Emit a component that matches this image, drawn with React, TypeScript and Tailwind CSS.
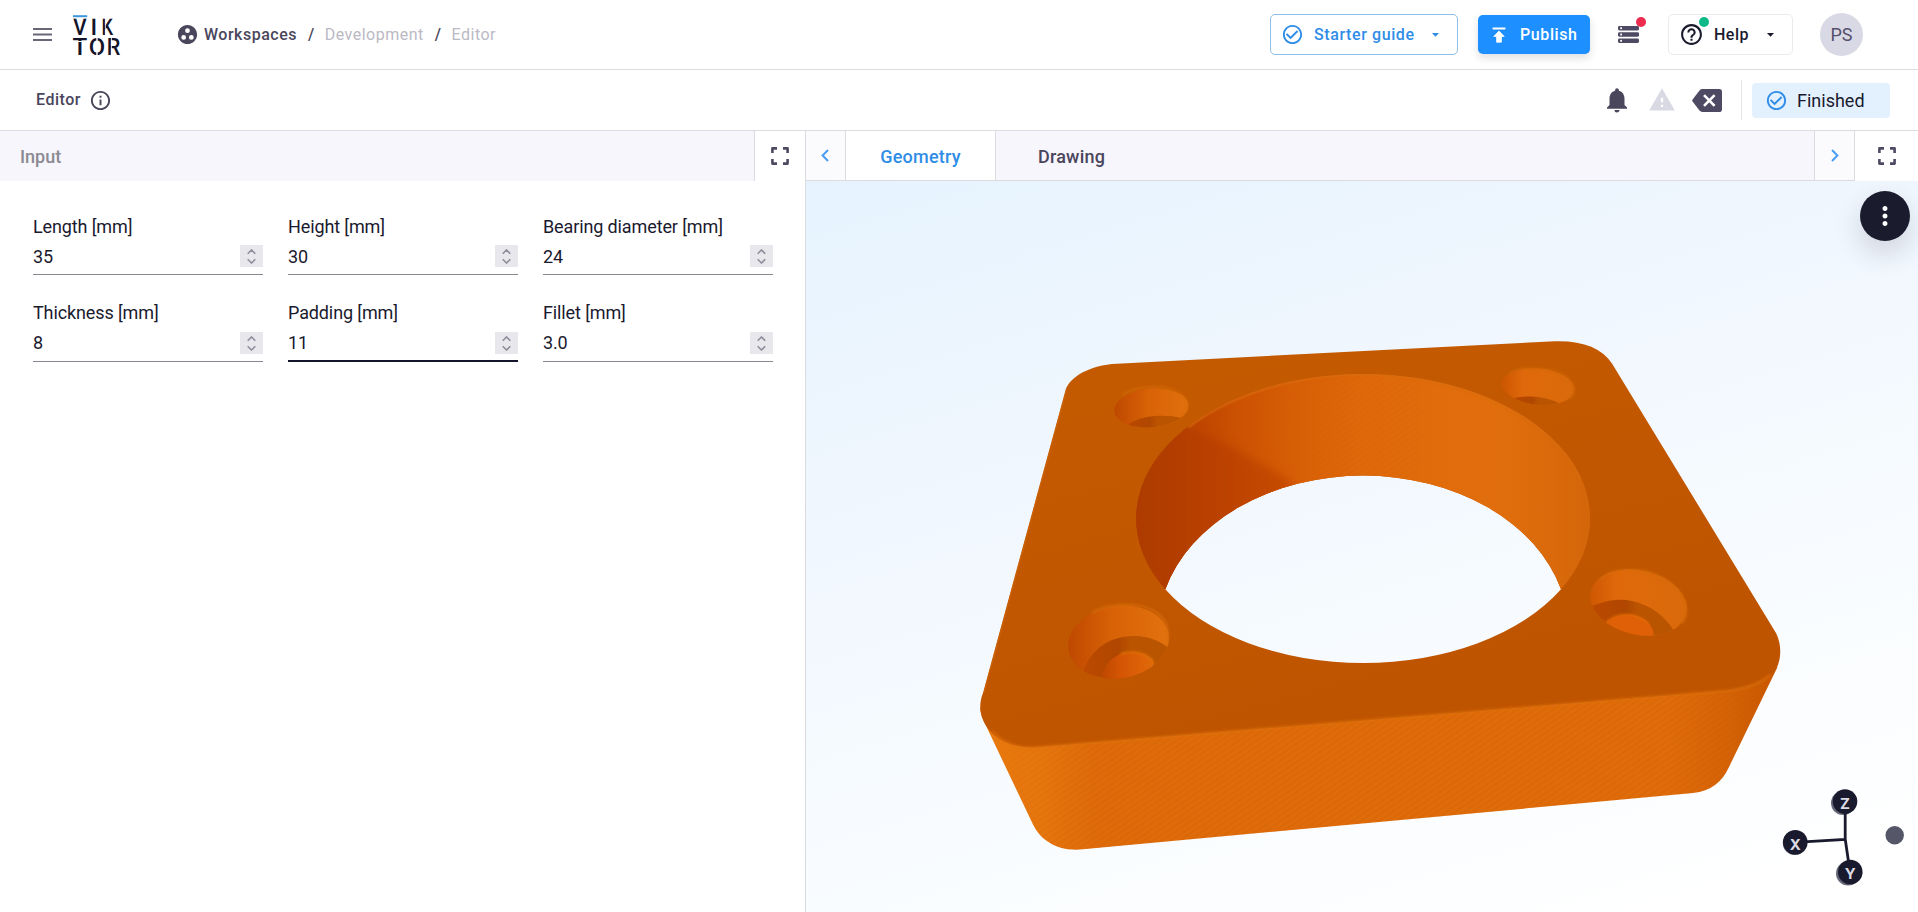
import React from "react";
import {
  MdGroupWork,
  MdInfoOutline,
  MdCheckCircleOutline,
  MdArrowDropDown,
  MdHelpOutline,
  MdNotifications,
  MdWarning,
  MdMoreVert,
} from "react-icons/md";

function Logo() {
  return (
    <svg width="56" height="54" viewBox="69 9 56 54" className="block" aria-label="VIKTOR">
      <g fill="#14142a" fontFamily="Roboto, 'Liberation Sans', sans-serif" fontSize="23.4" fontWeight="500">
        <text x="73.1" y="35.2" textLength="13.8" lengthAdjust="spacingAndGlyphs">V</text>
        <text x="90.6" y="35.2">I</text>
        <text x="101.4" y="35.2" textLength="11.6" lengthAdjust="spacingAndGlyphs">K</text>
        <text x="72.6" y="55.1" textLength="14.8" lengthAdjust="spacingAndGlyphs">T</text>
        <text x="88.8" y="55.1" textLength="16.4" lengthAdjust="spacingAndGlyphs">O</text>
        <text x="106.8" y="55.1" textLength="13.6" lengthAdjust="spacingAndGlyphs">R</text>
      </g>
      <rect x="72" y="17" width="49" height="1.7" fill="#fff" />
      <rect x="73" y="15.2" width="14.2" height="2" fill="#3d97dc" />
      <g stroke="#fff">
        <path d="M73 41.5H87" strokeWidth="1" />
        <path d="M97 37V42.5M97 51.5V57" strokeWidth="1.4" />
        <path d="M105.4 17V36" strokeWidth="0.8" />
        <path d="M111.4 37V57" strokeWidth="0.9" />
      </g>
    </svg>
  );
}

function FullscreenIcon() {
  return (
    <svg width="18" height="18" viewBox="0 0 18 18" className="block" fill="none" stroke="#4f4a63" strokeWidth="2.6" strokeLinejoin="round">
      <path d="M1.4 6V1.4H6M12 1.4H16.6V6M16.6 12V16.6H12M6 16.6H1.4V12" />
    </svg>
  );
}

function Chevron({ flip }: { flip?: boolean }) {
  return (
    <svg width="8" height="13" viewBox="0 0 8 13" className="block" fill="none" stroke="#4a9df0" strokeWidth="2">
      <path d={flip ? "M1 1L6.4 6.5L1 12" : "M7 1L1.6 6.5L7 12"} />
    </svg>
  );
}

function Spinner() {
  return (
    <div className="flex h-[22px] w-[23px] items-center justify-center bg-[#e8e7ec]">
      <svg width="9" height="15" viewBox="0 0 9 15" fill="none" stroke="#8f8d9b" strokeWidth="1.6">
        <path d="M0.7 4.8L4.5 1L8.3 4.8M0.7 10.2L4.5 14L8.3 10.2" />
      </svg>
    </div>
  );
}

type FieldProps = { label: string; value: string; active?: boolean; tight?: boolean };

function Field({ label, value, active, tight }: FieldProps) {
  return (
    <div className="flex h-[62px] flex-col text-[18px] tracking-[-0.12px] text-[#1a1a2e]">
      <div className={tight ? "h-[28px] leading-[25px]" : "h-[28px] leading-[27px]"}>{label}</div>
      <div
        className={
          active
            ? "flex h-[34px] items-start justify-between border-b-2 border-[#14142c] pt-[4px]"
            : "flex h-[34px] items-start justify-between border-b border-[#8a8992] pt-[4px]"
        }
      >
        <span className={tight ? "leading-[22px]" : "leading-[24px]"}>{value}</span>
        <Spinner />
      </div>
    </div>
  );
}

const fields: FieldProps[] = [
  { label: "Length [mm]", value: "35" },
  { label: "Height [mm]", value: "30" },
  { label: "Bearing diameter [mm]", value: "24" },
  { label: "Thickness [mm]", value: "8", tight: true },
  { label: "Padding [mm]", value: "11", active: true, tight: true },
  { label: "Fillet [mm]", value: "3.0", tight: true },
];

const TOP_OUTLINE =
  "M1066 388.5C1071 377 1089 365 1117 363.7L1550 341.5C1580 339.5 1601 347 1612 363.5L1776 633C1781 643 1781.5 655 1778 665C1772 679 1752 688.5 1727 690.7L1034 747.5C1008 748 984 735 980.3 710C980 703 981 698 983 693Z";
const OPENING = "M1165.3 589.3A205 154 0 0 1 1561 589.3A227 144.5 0 0 1 1165.3 589.3Z";
const WALL = "M1165.3 589.3A227 144.5 0 1 1 1561 589.3A205 154 0 0 0 1165.3 589.3Z";

function Scene() {
  return (
    <svg viewBox="806 181 1112 731" width="1112" height="731" className="block">
      <defs>
        <linearGradient id="top" x1="1200" y1="350" x2="1300" y2="740" gradientUnits="userSpaceOnUse">
          <stop offset="0" stopColor="#c45a00" />
          <stop offset="1" stopColor="#bf5400" />
        </linearGradient>
        <linearGradient id="front" x1="985" y1="0" x2="1780" y2="0" gradientUnits="userSpaceOnUse">
          <stop offset="0" stopColor="#e8790e" />
          <stop offset="0.07" stopColor="#e6760e" />
          <stop offset="0.14" stopColor="#df6b0a" />
          <stop offset="0.86" stopColor="#e06c0a" />
          <stop offset="0.93" stopColor="#d66307" />
          <stop offset="1" stopColor="#c75600" />
        </linearGradient>
        <linearGradient id="wall" x1="1136" y1="0" x2="1591" y2="0" gradientUnits="userSpaceOnUse">
          <stop offset="0" stopColor="#ae3c00" />
          <stop offset="0.08" stopColor="#b84000" />
          <stop offset="0.15" stopColor="#c04700" />
          <stop offset="0.23" stopColor="#cd5202" />
          <stop offset="0.35" stopColor="#d85e06" />
          <stop offset="0.5" stopColor="#df690a" />
          <stop offset="0.8" stopColor="#e16e0c" />
          <stop offset="1" stopColor="#d4660a" />
        </linearGradient>
        <linearGradient id="shade" x1="1136" y1="0" x2="1300" y2="0" gradientUnits="userSpaceOnUse">
          <stop offset="0" stopColor="#ae3b00" />
          <stop offset="0.35" stopColor="#b63f00" />
          <stop offset="1" stopColor="#c94b00" />
        </linearGradient>
        <linearGradient id="bore" x1="0" y1="0" x2="1" y2="0">
          <stop offset="0" stopColor="#bd4700" />
          <stop offset="0.45" stopColor="#d86206" />
          <stop offset="1" stopColor="#e2720e" />
        </linearGradient>
        <linearGradient id="boreRight" x1="0" y1="0" x2="1" y2="0">
          <stop offset="0" stopColor="#cc5502" />
          <stop offset="0.3" stopColor="#df690a" />
          <stop offset="1" stopColor="#d96a0b" />
        </linearGradient>
        <linearGradient id="floor" x1="0" y1="0" x2="1" y2="0">
          <stop offset="0" stopColor="#bd4900" />
          <stop offset="0.44" stopColor="#b04700" />
          <stop offset="0.58" stopColor="#bb5400" />
          <stop offset="1" stopColor="#b85400" />
        </linearGradient>
        <linearGradient id="pin" x1="0" y1="0" x2="1" y2="0">
          <stop offset="0" stopColor="#bd4800" />
          <stop offset="0.35" stopColor="#d45404" />
          <stop offset="1" stopColor="#e26a0a" />
        </linearGradient>
        <pattern id="grain" width="200" height="5" patternUnits="userSpaceOnUse" patternTransform="rotate(-34)">
          <rect width="200" height="1.6" y="0.9" fill="#c65500" opacity="0.1" />
          <rect width="200" height="2.4" y="0.5" fill="#c65500" opacity="0.1" />
        </pattern>
        <linearGradient id="grainFade" x1="990" y1="0" x2="1080" y2="0" gradientUnits="userSpaceOnUse">
          <stop offset="0" stopColor="#fff" stopOpacity="0" />
          <stop offset="1" stopColor="#fff" />
        </linearGradient>
        <mask id="grainMask" maskUnits="userSpaceOnUse" x="980" y="660" width="800" height="200">
          <rect x="980" y="660" width="800" height="200" fill="url(#grainFade)" />
        </mask>
        <filter id="soft" x="-20%" y="-20%" width="140%" height="140%">
          <feGaussianBlur stdDeviation="5" />
        </filter>
        <filter id="slight" x="-20%" y="-20%" width="140%" height="140%">
          <feGaussianBlur stdDeviation="0.8" />
        </filter>
        <clipPath id="wallClip"><path d={WALL} /></clipPath>
        <clipPath id="bl"><ellipse cx="1118.5" cy="642" rx="50.6" ry="36.2" transform="rotate(-9 1118.5 642)" /></clipPath>
        <clipPath id="br"><ellipse cx="1638.5" cy="602.5" rx="49" ry="32.2" transform="rotate(13 1638.5 602.5)" /></clipPath>
        <clipPath id="tl"><ellipse cx="1151.3" cy="408" rx="37.2" ry="19.4" transform="rotate(-5 1151.3 408)" /></clipPath>
        <clipPath id="tr"><ellipse cx="1538.3" cy="386.5" rx="36.2" ry="18.3" transform="rotate(6 1538.3 386.5)" /></clipPath>
      </defs>

      {/* front side */}
      <path
        fill="url(#front)"
        d="M980.4 708C980.6 713 981.5 717 983.5 720.5L1033 824.5C1041 841 1058 851 1080 849.5L1693 793C1711 791 1722 782 1728.5 768L1777.5 667L1700 640L1030 700Z"
      />
      <path
        fill="url(#grain)"
        mask="url(#grainMask)"
        d="M991.7 738L1033 824.5C1041 841 1058 851 1080 849.5L1693 793C1711 791 1722 782 1728.5 768L1765 690L1700 640Z"
      />

      {/* top face and bore */}
      <path fill="url(#top)" fillRule="evenodd" d={TOP_OUTLINE + OPENING} />
      <path
        fill="none"
        stroke="#e0740f"
        strokeWidth="1.8"
        opacity="0.8"
        filter="url(#slight)"
        d="M992 731C1003 743 1018 747.8 1034 747.5L1727 690.7C1747 688.5 1761 683 1770 675"
      />
      <path fill="none" stroke="#cf6507" strokeWidth="1.4" opacity="0.6" d="M1066.8 389L984 693" />
      <path fill="url(#wall)" d={WALL} />
      <g clipPath="url(#wallClip)">
        <path fill="url(#shade)" filter="url(#soft)" d="M1110 415L1180 425L1222 442L1262 464L1292 482L1290 500L1160 620L1110 600Z" />
        <path fill="url(#grain)" opacity="0.6" d="M1240 370H1420V480L1290 480Z" />
        <ellipse
          cx="1363.2"
          cy="518.8"
          rx="227"
          ry="144.5"
          fill="none"
          stroke="#d96d10"
          strokeWidth="3"
          filter="url(#slight)"
          strokeDasharray="440 800"
          strokeDashoffset="-700"
          opacity="0.85"
        />
      </g>

      {/* rear left screw hole */}
      <g clipPath="url(#tl)">
        <rect x="1112" y="386" width="80" height="45" fill="url(#bore)" />
        <path d="M1124 430L1130 423C1144 415 1164 414 1182 418L1170 432Z" fill="url(#floor)" />
      </g>
      <path d="M1122 395C1136 385 1168 384 1181 394C1189 400 1189 408 1183 415" fill="none" stroke="#d66b0b" strokeWidth="1.4" filter="url(#slight)" />

      {/* rear right screw hole */}
      <g clipPath="url(#tr)">
        <rect x="1500" y="365" width="80" height="45" fill="url(#boreRight)" />
        <path d="M1508 402L1514 398C1526 395 1548 396 1562 405L1550 412H1520Z" fill="url(#floor)" />
      </g>
      <path d="M1508 374C1520 365 1556 366 1568 378C1577 387 1576 395 1568 400" fill="none" stroke="#d0670a" strokeWidth="1.4" filter="url(#slight)" />

      {/* front left screw hole */}
      <g clipPath="url(#bl)">
        <rect x="1066" y="603" width="104" height="80" fill="url(#bore)" />
        <path d="M1081 680C1086 652 1108 635 1136 636C1147 636.5 1158 640 1167 646.5L1164 682Z" fill="url(#floor)" />
        <path d="M1101 681C1103 661 1118 651.5 1134 652C1145 653 1151 657 1154 663L1146 682Z" fill="url(#pin)" />
        <path d="M1120 654C1132 650 1147 652 1154 662" fill="none" stroke="#e2740c" strokeWidth="1.4" filter="url(#slight)" />
      </g>
      <path d="M1092 613C1108 602.5 1141 601 1157 613C1168 621 1170 633 1166 646" fill="none" stroke="#da6e0e" strokeWidth="1.6" filter="url(#slight)" />

      {/* front right screw hole */}
      <g clipPath="url(#br)">
        <rect x="1586" y="566" width="104" height="74" fill="url(#boreRight)" />
        <path d="M1588 608C1602 601 1618 598 1632 601C1650 605 1664 615 1674 631L1664 644H1600Z" fill="url(#floor)" />
        <path d="M1602 627C1612 613.5 1630 611 1644 619C1650 623 1653 628 1654 636L1620 644Z" fill="#df6006" />
        <path d="M1606 622C1618 611 1636 612 1649 624" fill="none" stroke="#e2700c" strokeWidth="1.2" filter="url(#slight)" />
      </g>
      <path d="M1600 579C1614 566.5 1650 565 1673 585C1687 598 1690 612 1682 624" fill="none" stroke="#d56b0c" strokeWidth="1.6" filter="url(#slight)" />

      {/* orientation gizmo */}
      <g fill="#666778">
        <circle cx="1843" cy="803" r="12" />
        <circle cx="1848" cy="873.5" r="12" />
        <circle cx="1794.8" cy="843" r="12" />
        <circle cx="1894.7" cy="835.3" r="9.2" fill="#555667" />
      </g>
      <path d="M1845.2 802V839.5L1795 842.3M1845.2 839L1850 872" stroke="#1a1a2e" strokeWidth="2.8" fill="none" />
      <g fill="#1a1a2e">
        <circle cx="1845" cy="801.5" r="12.3" />
        <circle cx="1795.3" cy="842.3" r="12.3" />
        <circle cx="1850.3" cy="872" r="12.3" />
      </g>
      <g fill="#dcdce4" fontFamily="Inter, 'Liberation Sans', sans-serif" fontSize="15" fontWeight="700" textAnchor="middle">
        <text x="1845" y="809.2">Z</text>
        <text x="1795.3" y="849.8">X</text>
        <text x="1850.3" y="879.4">Y</text>
      </g>
    </svg>
  );
}

export default function App() {
  return (
    <div className="flex h-[912px] w-[1918px] flex-col overflow-hidden bg-white font-['Roboto','Liberation_Sans',sans-serif] text-[#4a465c]">
      <header className="flex h-[70px] shrink-0 items-center border-b border-[#dcdbe0] pr-[55px] pl-[33px]">
        <svg width="19" height="13" viewBox="0 0 19 13" fill="#6a6678">
          <rect width="19" height="2" />
          <rect y="5.5" width="19" height="2" />
          <rect y="11" width="19" height="2" />
        </svg>
        <div className="ml-[17px] pt-[3px]">
          <Logo />
        </div>
        <nav className="ml-[51px] flex items-center text-[16px] tracking-[0.5px]">
          <MdGroupWork size={23} color="#4a465c" />
          <span className="ml-[5px] font-medium">Workspaces</span>
          <span className="ml-[11px] font-medium">/</span>
          <span className="ml-[10px] text-[#bbb9c4]">Development</span>
          <span className="ml-[11px] font-medium">/</span>
          <span className="ml-[10px] text-[#bbb9c4]">Editor</span>
        </nav>
        <div className="ml-auto flex items-center">
          <button className="flex h-[41px] w-[188px] items-center rounded-[5px] border border-[#8fbdec] pl-[10px] text-[16px] font-medium tracking-[0.6px] text-[#2f8de8]">
            <MdCheckCircleOutline size={23} />
            <span className="ml-[10px]">Starter guide</span>
            <MdArrowDropDown size={17} className="ml-[12px]" />
          </button>
          <button className="ml-[20px] flex h-[39px] w-[112px] items-center rounded-[5px] bg-[#1e8fff] pl-[14px] text-[16px] font-medium tracking-[0.6px] text-white shadow-[0_4px_8px_rgba(30,30,60,0.14)]">
            <svg width="14" height="16" viewBox="0 0 14 16" fill="currentColor">
              <rect x="0.5" y="0.4" width="13" height="2" rx="0.6" />
              <path d="M7 4L12.2 9.4H9.4V15.2H4.6V9.4H1.8Z" stroke="currentColor" strokeWidth="0.8" strokeLinejoin="round" />
            </svg>
            <span className="ml-[14px]">Publish</span>
          </button>
          <div className="relative ml-[28px]">
            <svg width="21" height="17" viewBox="0 0 21 17" className="block" fill="#4f4a63">
              <rect width="21" height="4.4" rx="1.4" />
              <rect y="6.3" width="21" height="4.4" rx="1.4" />
              <rect y="12.6" width="21" height="4.4" rx="1.4" />
              <g fill="#fff">
                <rect x="2.2" y="1.3" width="1.8" height="1.8" />
                <rect x="2.2" y="7.6" width="1.8" height="1.8" />
                <rect x="2.2" y="13.9" width="1.8" height="1.8" />
              </g>
            </svg>
            <span className="absolute -top-[9px] left-[18px] h-[10px] w-[10px] rounded-full bg-[#ee2c4f]" />
          </div>
          <button className="relative ml-[29px] flex h-[41px] w-[125px] items-center rounded-[5px] border border-[#ebeaee] pl-[10px] text-[16px] font-medium tracking-[0.5px] text-[#1a1a2e]">
            <MdHelpOutline size={25} />
            <span className="ml-[10px]">Help</span>
            <MdArrowDropDown size={17} className="ml-[13px]" />
            <span className="absolute top-[2px] left-[30px] h-[10px] w-[10px] rounded-full bg-[#0ab88a]" />
          </button>
          <div className="ml-[27px] flex h-[43px] w-[43px] items-center justify-center rounded-full bg-[#d9d9e6] text-[18px] text-[#55516a]">PS</div>
        </div>
      </header>

      <div className="flex h-[61px] shrink-0 items-center border-b border-[#dcdbe0] pr-[28px] pl-[36px]">
        <span className="text-[16px] font-medium tracking-[0.5px]">Editor</span>
        <MdInfoOutline size={23} className="ml-[8px]" />
        <div className="ml-auto flex items-center">
          <MdNotifications size={30} color="#4a465c" />
          <MdWarning size={28} color="#d9d9e4" className="ml-[16px]" />
          <svg width="30" height="23" viewBox="0 0 30 23" className="ml-[16px]">
            <path d="M7.5 1.4Q8.6 0 10.4 0H27.2Q30 0 30 2.8V20.2Q30 23 27.2 23H10.4Q8.6 23 7.5 21.6L0.6 12.6Q-0.2 11.5 0.6 10.4Z" fill="#4f4a63" />
            <path d="M12 6.2L22.6 16.8M22.6 6.2L12 16.8" stroke="#fff" strokeWidth="2.6" />
          </svg>
          <div className="ml-[19px] h-[40px] w-px bg-[#e6e5ea]" />
          <div className="ml-[10px] flex h-[35px] w-[138px] items-center rounded-[4px] bg-[#e3f1fe] pl-[13px] text-[18px] text-[#1a1a2e]">
            <MdCheckCircleOutline size={23} color="#2f8de8" />
            <span className="ml-[9px]">Finished</span>
          </div>
        </div>
      </div>

      <main className="flex min-h-0 flex-1">
        <section className="flex w-[805px] flex-col">
          <div className="flex h-[50px]">
            <div className="flex w-[754px] items-center bg-[#f7f6fc] pt-px pl-[20px] text-[18px] text-[#8b8a92]">
              <span className="font-medium">Input</span>
            </div>
            <div className="flex flex-1 items-center justify-center border-l border-[#dcdbe0] bg-white">
              <FullscreenIcon />
            </div>
          </div>
          <div className="grid w-[773px] grid-cols-3 gap-x-[25px] gap-y-[25px] pt-[32px] pl-[33px]">
            {fields.map((f) => (
              <Field key={f.label} {...f} />
            ))}
          </div>
        </section>

        <section className="flex min-w-0 flex-1 flex-col border-l border-[#dcdbe0]">
          <div className="flex h-[50px] shrink-0 text-[18px] font-medium">
            <div className="flex w-[40px] items-center justify-center border-r border-b border-[#dcdbe0] bg-[#fbfbfe] pr-px">
              <Chevron />
            </div>
            <div className="flex w-[150px] items-center justify-center border-r border-b border-[#dcdbe0] bg-white pt-[2px] tracking-[0.2px] text-[#2f8de8]">
              Geometry
            </div>
            <div className="flex flex-1 items-center border-b border-[#dcdbe0] bg-[#f7f6fc] pt-[2px] pl-[42px] tracking-[0.2px]">Drawing</div>
            <div className="flex w-[41px] items-center justify-center border-x border-b border-[#dcdbe0] bg-[#fbfbfe]">
              <Chevron flip />
            </div>
            <div className="flex w-[63px] items-center justify-center bg-white">
              <FullscreenIcon />
            </div>
          </div>
          <div className="relative flex-1 bg-[linear-gradient(163deg,#e6f3fe_0%,#eff6fe_30%,#f7fbff_60%,#ffffff_95%)]">
            <Scene />
            <button className="absolute top-[10px] right-[8px] flex h-[50px] w-[50px] items-center justify-center rounded-full bg-[#1b1b2e] text-white shadow-[0_12px_28px_rgba(27,27,46,0.16)]">
              <MdMoreVert size={30} />
            </button>
          </div>
        </section>
      </main>
    </div>
  );
}
